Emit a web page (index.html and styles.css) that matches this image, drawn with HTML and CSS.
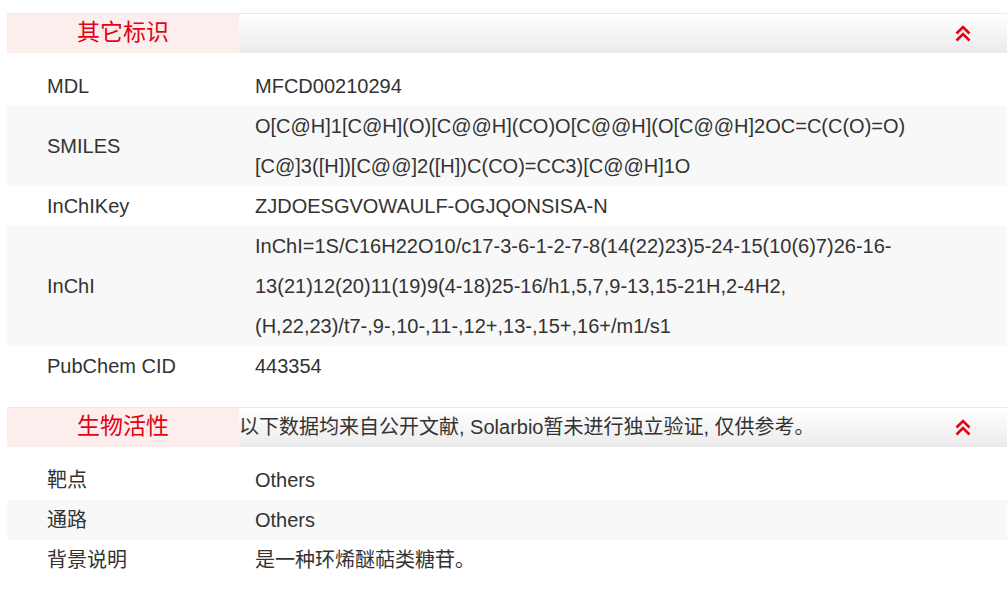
FILE: index.html
```html
<!DOCTYPE html>
<html lang="zh">
<head>
<meta charset="utf-8">
<link rel="stylesheet" href="styles.css">
</head>
<body>
<div class="page">
  <section class="sec">
    <div class="sec-head">
      <div class="sec-tab">其它标识</div>
      <div class="sec-note"></div>
      <svg class="sec-icon" viewBox="0 0 16 17" width="16" height="17"><path d="M1.5 8.5 L8 2 L14.5 8.5 M1.5 15.5 L8 9 L14.5 15.5" fill="none" stroke="#e60012" stroke-width="2.6"/></svg>
    </div>
    <table class="props">
      <tr><td class="k">MDL</td><td class="v">MFCD00210294</td></tr>
      <tr class="alt"><td class="k">SMILES</td><td class="v">O[C@H]1[C@H](O)[C@@H](CO)O[C@@H](O[C@@H]2OC=C(C(O)=O)[C@]3([H])[C@@]2([H])C(CO)=CC3)[C@@H]1O</td></tr>
      <tr><td class="k">InChIKey</td><td class="v">ZJDOESGVOWAULF-OGJQONSISA-N</td></tr>
      <tr class="alt"><td class="k">InChI</td><td class="v">InChI=1S/C16H22O10/c17-3-6-1-2-7-8(14(22)23)5-24-15(10(6)7)26-16-13(21)12(20)11(19)9(4-18)25-16/h1,5,7,9-13,15-21H,2-4H2,(H,22,23)/t7-,9-,10-,11-,12+,13-,15+,16+/m1/s1</td></tr>
      <tr><td class="k">PubChem CID</td><td class="v">443354</td></tr>
    </table>
  </section>
  <section class="sec sec2">
    <div class="sec-head">
      <div class="sec-tab">生物活性</div>
      <div class="sec-note">以下数据均来自公开文献, Solarbio暂未进行独立验证, 仅供参考。</div>
      <svg class="sec-icon" viewBox="0 0 16 17" width="16" height="17"><path d="M1.5 8.5 L8 2 L14.5 8.5 M1.5 15.5 L8 9 L14.5 15.5" fill="none" stroke="#e60012" stroke-width="2.6"/></svg>
    </div>
    <table class="props">
      <tr><td class="k">靶点</td><td class="v">Others</td></tr>
      <tr class="alt"><td class="k">通路</td><td class="v">Others</td></tr>
      <tr><td class="k">背景说明</td><td class="v">是一种环烯醚萜类糖苷。</td></tr>
    </table>
  </section>
</div>
</body>
</html>
```

FILE: styles.css
```css
html, body {
  margin: 0;
  padding: 0;
  background: #fff;
}
body {
  font-family: "Liberation Sans", Arial, "Noto Sans CJK SC", sans-serif;
  color: #333;
  font-size: 20px;
}
.page {
  padding: 13px 0 0 7px;
  width: 1000px;
}
.sec2 {
  margin-top: 21px;
}
.sec-head {
  display: flex;
  align-items: center;
  height: 39px;
  border-top: 1px solid #f6e3e3;
  background: linear-gradient(to bottom, #ffffff, #ebebeb);
}
.sec-tab {
  box-sizing: border-box;
  width: 232px;
  height: 100%;
  padding-bottom: 6px;
  display: flex;
  align-items: center;
  justify-content: center;
  background: #fdeeee;
  color: #e60012;
  font-size: 23px;
  line-height: 1;
  font-family: "Noto Sans CJK SC", sans-serif;
}
.sec-note {
  flex: 1;
  color: #333;
  font-size: 20px;
  font-family: "Liberation Sans", Arial, "Noto Sans CJK SC", sans-serif;
  line-height: 39px;
  white-space: nowrap;
}
.sec-icon {
  margin-right: 36px;
  margin-bottom: 1px;
}
.props {
  margin-top: 13px;
  width: 1000px;
  border-collapse: collapse;
  table-layout: fixed;
}
.props td {
  padding: 0;
  line-height: 40px;
  vertical-align: middle;
}
.props .k {
  width: 208px;
  padding-left: 40px;
}
.props .v {
  padding-right: 40px;
  word-break: normal;
  overflow-wrap: anywhere;
}
.props tr.alt {
  background: #f8f8f8;
}
```
